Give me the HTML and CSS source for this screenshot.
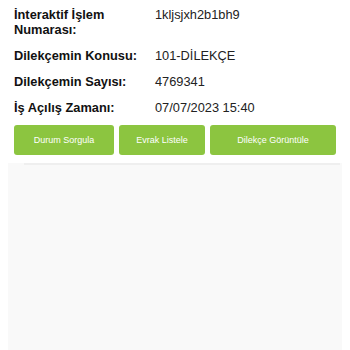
FILE: index.html
```html
<!DOCTYPE html>
<html lang="tr">
<head>
<meta charset="utf-8">
<link rel="stylesheet" href="styles.css">
</head>
<body>
<div class="page">
  <dl class="info">
    <dt>İnteraktif İşlem Numarası:</dt>
    <dd>1kljsjxh2b1bh9</dd>
    <dt>Dilekçemin Konusu:</dt>
    <dd>101-DİLEKÇE</dd>
    <dt>Dilekçemin Sayısı:</dt>
    <dd>4769341</dd>
    <dt>İş Açılış Zamanı:</dt>
    <dd>07/07/2023 15:40</dd>
  </dl>
  <div class="actions">
    <button class="btn btn-durum">Durum Sorgula</button>
    <button class="btn btn-evrak">Evrak Listele</button>
    <button class="btn btn-dilekce">Dilekçe Görüntüle</button>
  </div>
  <div class="panel">
    <div class="panel-line"></div>
  </div>
</div>
</body>
</html>
```
FILE: styles.css
```css
html, body {
  margin: 0;
  padding: 0;
  background: #fff;
}
body {
  font-family: "Liberation Sans", Arial, sans-serif;
  width: 350px;
  height: 350px;
  overflow: hidden;
}
.page {
  display: flex;
  flex-direction: column;
  height: 350px;
}
.info {
  display: grid;
  grid-template-columns: 141px 1fr;
  row-gap: 11px;
  margin: 0;
  padding: 7px 14px 0 14px;
  font-size: 12.8px;
  line-height: 15px;
}
.info dt {
  font-weight: bold;
  color: #111;
  width: 100px;
  margin: 0;
}
.info dt:nth-of-type(n+2) {
  width: auto;
}
.info dd {
  margin: 0;
  color: #222;
}
.actions {
  display: flex;
  gap: 5px;
  padding: 10px 14px 0 14px;
}
.btn {
  height: 30px;
  border: none;
  border-radius: 3px;
  background: #8cc540;
  color: #fff;
  font-family: "Liberation Sans", Arial, sans-serif;
  font-size: 9px;
  padding: 0;
}
.btn-durum { width: 100px; }
.btn-evrak { width: 86px; }
.btn-dilekce { width: 126px; }
.panel {
  flex: 1;
  margin: 8px 8px 0 8px;
  background: #f9f9f9;
}
.panel-line {
  height: 2px;
  margin: 0 2px 0 16px;
  background: #efefef;
}
```
